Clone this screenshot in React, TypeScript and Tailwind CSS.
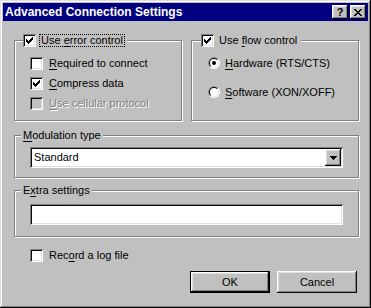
import React, { useId } from 'react';

const raised =
  'shadow-[inset_-1px_-1px_#0a0a0a,inset_1px_1px_#ffffff,inset_-2px_-2px_#808080,inset_2px_2px_#dfdfdf]';
const sunken =
  'shadow-[inset_1px_1px_#808080,inset_-1px_-1px_#ffffff,inset_2px_2px_#0a0a0a,inset_-2px_-2px_#dfdfdf]';

const Check: React.FC<{ checked?: boolean; disabled?: boolean }> = ({ checked, disabled }) => (
  <span
    className={`inline-flex h-[13px] w-[13px] shrink-0 items-center justify-center ${sunken} ${
      disabled ? 'bg-[#c0c0c0]' : 'bg-white'
    }`}
  >
    {checked && (
      <svg width="7" height="7" viewBox="0 0 7 7" shapeRendering="crispEdges">
        <path
          d="M0 2h1v3H0zM1 3h1v3H1zM2 4h1v3H2zM3 3h1v3H3zM4 2h1v3H4zM5 1h1v3H5zM6 0h1v3H6z"
          fill="#000"
        />
      </svg>
    )}
  </span>
);

const Radio: React.FC<{ checked?: boolean }> = ({ checked }) => {
  const id = useId();
  return (
    <svg width="12" height="12" viewBox="0 0 12 12" className="shrink-0">
      <defs>
        <clipPath id={id}>
          <polygon points="0,0 12,0 0,12" />
        </clipPath>
      </defs>
      <circle cx="6" cy="6" r="6" fill="#fff" />
      <circle cx="6" cy="6" r="6" fill="#808080" clipPath={`url(#${id})`} />
      <circle cx="6" cy="6" r="5" fill="#dfdfdf" />
      <circle cx="6" cy="6" r="5" fill="#000" clipPath={`url(#${id})`} />
      <circle cx="6" cy="6" r="4" fill="#fff" />
      {checked && <circle cx="6" cy="6" r="2" fill="#000" />}
    </svg>
  );
};

const Label: React.FC<{ pre?: string; u: string; post: string; disabled?: boolean }> = ({
  pre = '',
  u,
  post,
  disabled,
}) => (
  <span className={disabled ? 'text-[#808080] [text-shadow:1px_1px_0_#ffffff]' : 'text-black'}>
    {pre}
    <span className="underline underline-offset-[2px]">{u}</span>
    {post}
  </span>
);

const CheckRow: React.FC<{
  checked?: boolean;
  disabled?: boolean;
  pre?: string;
  u: string;
  post: string;
}> = ({ checked, disabled, pre, u, post }) => (
  <div className="flex h-[13px] items-center gap-[6px] leading-[13px]">
    <Check checked={checked} disabled={disabled} />
    <Label pre={pre} u={u} post={post} disabled={disabled} />
  </div>
);

const RadioRow: React.FC<{ checked?: boolean; u: string; post: string }> = ({ checked, u, post }) => (
  <div className="flex h-[12px] items-center gap-[5px] leading-[13px]">
    <Radio checked={checked} />
    <Label u={u} post={post} />
  </div>
);

const groupBox = 'border border-[#808080] shadow-[inset_1px_1px_#ffffff,1px_1px_#ffffff] p-0 m-0 min-w-0';

export default function App() {
  return (
    <div
      className={`flex h-[308px] w-[371px] flex-col bg-[#c0c0c0] p-[3px] font-['Liberation_Sans',Arial,sans-serif] text-[11px] ${'shadow-[inset_-1px_-1px_#0a0a0a,inset_1px_1px_#dfdfdf,inset_-2px_-2px_#808080,inset_2px_2px_#ffffff]'}`}
    >
      {/* title bar */}
      <div className="flex h-[18px] items-center bg-[#000080] pl-[2px] pr-[2px]">
        <span className="flex-1 text-[12px] font-bold leading-[18px] text-white">
          Advanced Connection Settings
        </span>
        <div className="flex gap-[2px]">
          <div className={`flex h-[14px] w-[16px] items-center justify-center bg-[#c0c0c0] ${raised}`}>
            <span className="text-[11px] font-bold leading-[11px] text-black">?</span>
          </div>
          <div className={`flex h-[14px] w-[16px] items-center justify-center bg-[#c0c0c0] ${raised}`}>
            <svg width="8" height="7" viewBox="0 0 8 7" shapeRendering="crispEdges">
              <path
                d="M0 0h2v1H0zM6 0h2v1H6zM1 1h2v1H1zM5 1h2v1H5zM2 2h4v1H2zM3 3h2v1H3zM2 4h4v1H2zM1 5h2v1H1zM5 5h2v1H5zM0 6h2v1H0zM6 6h2v1H6z"
                fill="#000"
              />
            </svg>
          </div>
        </div>
      </div>

      {/* body */}
      <div className="flex flex-1 flex-col pl-[11px] pr-[9px] pt-[13px]">
        <div className="grid grid-cols-2 gap-x-[9px]">
          <fieldset className={groupBox}>
            <legend className="ml-[8px] flex items-center bg-[#c0c0c0] pr-[2px] leading-[13px]">
              <Check checked />
              <span className="ml-[3px] border border-dotted border-black px-[1px] leading-[11px]">
                <Label pre="Use " u="e" post="rror control" />
              </span>
            </legend>
            <div className="flex flex-col gap-[7px] pb-[10px] pl-[15px] pt-[10px]">
              <CheckRow u="R" post="equired to connect" />
              <CheckRow checked u="C" post="ompress data" />
              <CheckRow disabled u="U" post="se cellular protocol" />
            </div>
          </fieldset>
          <fieldset className={groupBox}>
            <legend className="ml-[9px] flex items-center bg-[#c0c0c0] pr-[2px] leading-[13px]">
              <Check checked />
              <span className="ml-[3px] border border-transparent px-[1px] leading-[11px]">
                <Label pre="Use " u="f" post="low control" />
              </span>
            </legend>
            <div className="flex flex-col gap-[17px] pl-[16px] pt-[10px]">
              <RadioRow checked u="H" post="ardware (RTS/CTS)" />
              <RadioRow u="S" post="oftware (XON/XOFF)" />
            </div>
          </fieldset>
        </div>

        <fieldset className={`${groupBox} mt-[8px]`}>
          <legend className="ml-[6px] bg-[#c0c0c0] px-[2px] leading-[13px]">
            <Label u="M" post="odulation type" />
          </legend>
          <div className="pb-[9px] pl-[15px] pr-[15px] pt-[5px]">
            <div className={`flex h-[21px] items-center bg-white p-[2px] ${sunken}`}>
              <span className="flex-1 pl-[2px] leading-[13px] text-black">Standard</span>
              <div className={`flex h-[17px] w-[16px] items-center justify-center bg-[#c0c0c0] ${raised}`}>
                <svg width="7" height="4" viewBox="0 0 7 4" shapeRendering="crispEdges">
                  <path d="M0 0h7v1H0zM1 1h5v1H1zM2 2h3v1H2zM3 3h1v1H3z" fill="#000" />
                </svg>
              </div>
            </div>
          </div>
        </fieldset>

        <fieldset className={`${groupBox} mt-[6px]`}>
          <legend className="ml-[6px] bg-[#c0c0c0] px-[2px] leading-[13px]">
            <Label pre="E" u="x" post="tra settings" />
          </legend>
          <div className="pb-[11px] pl-[15px] pr-[15px] pt-[7px]">
            <div className={`h-[21px] bg-white ${sunken}`} />
          </div>
        </fieldset>

        <div className="ml-[16px] mt-[12px]">
          <CheckRow pre="Rec" u="o" post="rd a log file" />
        </div>

        <div className="mt-[9px] flex justify-end gap-[7px] pr-[2px]">
          <div className="h-[22px] w-[80px] border border-black">
            <div className={`flex h-full w-full items-center justify-center bg-[#c0c0c0] text-black ${raised}`}>
              OK
            </div>
          </div>
          <div className={`flex h-[22px] w-[80px] items-center justify-center bg-[#c0c0c0] text-black ${raised}`}>
            Cancel
          </div>
        </div>
      </div>
    </div>
  );
}
